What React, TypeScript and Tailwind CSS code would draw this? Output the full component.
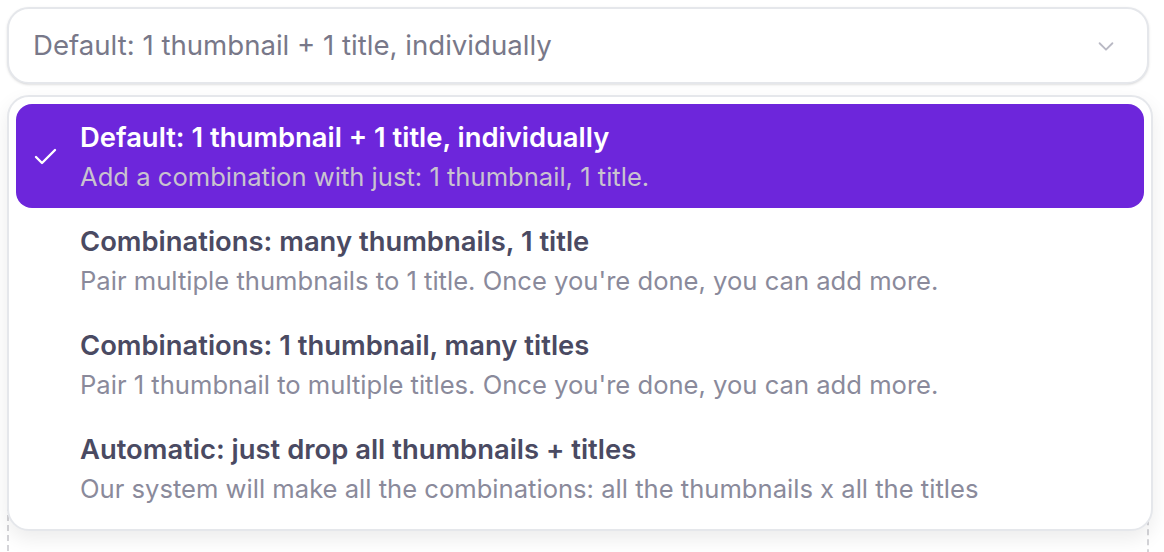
import React from "react";

const items = [
  {
    title: "Default: 1 thumbnail + 1 title, individually",
    desc: "Add a combination with just: 1 thumbnail, 1 title.",
    selected: true,
  },
  {
    title: "Combinations: many thumbnails, 1 title",
    desc: "Pair multiple thumbnails to 1 title. Once you're done, you can add more.",
  },
  {
    title: "Combinations: 1 thumbnail, many titles",
    desc: "Pair 1 thumbnail to multiple titles. Once you're done, you can add more.",
  },
  {
    title: "Automatic: just drop all thumbnails + titles",
    desc: "Our system will make all the combinations: all the thumbnails x all the titles",
  },
];

export default function App() {
  return (
    <div
      className="relative w-[1164px] h-[552px] bg-white overflow-hidden"
      style={{ fontFamily: "Inter, 'Noto Sans', sans-serif" }}
    >
      {/* dashed box underneath */}
      <div className="absolute left-[7px] top-[480px] w-[1142px] h-[100px] border-2 border-dashed border-[#d4d4d8] rounded-[20px]" />

      <div className="relative pt-[7px] pl-[7px]">
        <div className="w-[1142px] h-[77px] flex items-center justify-between pl-[24px] pr-[30px] bg-white border-2 border-[#e5e7eb] rounded-[22px] shadow-sm">
          <span className="text-[27.6px] text-[#787889]">
            Default: 1 thumbnail + 1 title, individually
          </span>
          <svg width="22" height="22" viewBox="0 0 24 24" fill="none" stroke="#b9b9c4" strokeWidth="2" strokeLinecap="round" strokeLinejoin="round">
            <path d="M5 9l7 7 7-7" />
          </svg>
        </div>

        <div className="absolute left-[7px] top-[95px] w-[1146px] bg-white border-2 border-[#e5e7eb] rounded-[22px] shadow-[0_8px_20px_rgba(0,0,0,0.08)] p-[7px] pb-[9px]">
          {items.map((it, i) => (
            <div
              key={i}
              className={`relative h-[104px] flex flex-col justify-center pl-[64px] rounded-[16px] ${
                it.selected ? "bg-[#6d26db]" : ""
              }`}
            >
              {it.selected && (
                <svg
                  className="absolute left-[17px] top-[43px]"
                  width="26"
                  height="20"
                  viewBox="0 0 26 20"
                  fill="none"
                  stroke="white"
                  strokeWidth="2.4"
                  strokeLinecap="round"
                  strokeLinejoin="round"
                >
                  <path d="M3 10l6 6L22 3" />
                </svg>
              )}
              <div
                className={`text-[27.4px] leading-[36px] font-semibold ${
                  it.selected ? "text-white" : "text-[#4a4a62]"
                }`}
              >
                {it.title}
              </div>
              <div
                className={`text-[25.6px] leading-[34px] mt-[5px] ${
                  it.selected ? "text-[#c9c3cf]" : "text-[#8a8a9b]"
                }`}
              >
                {it.desc}
              </div>
            </div>
          ))}
        </div>
      </div>
    </div>
  );
}
